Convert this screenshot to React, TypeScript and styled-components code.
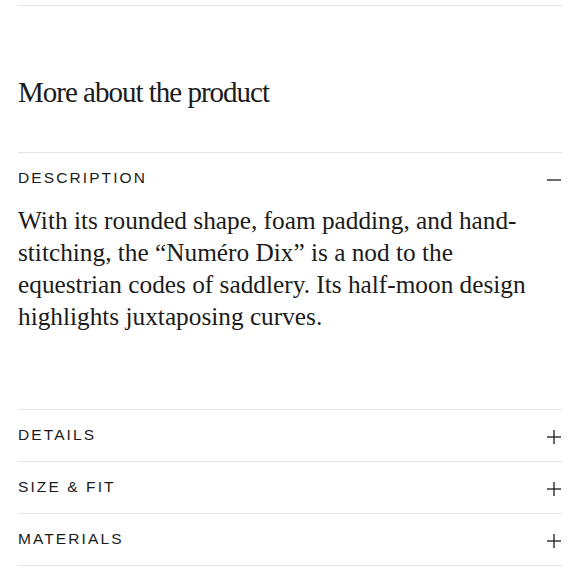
import React, { FC, useState } from 'react';
import styled, { createGlobalStyle } from 'styled-components';

const textColor = '#1b1b1b';
const ruleColor = '#e3e3e3';

const GlobalStyle = createGlobalStyle`
  html, body {
    margin: 0;
    padding: 0;
    background: #fff;
  }
`;

const Page = styled.div`
  padding: 5px 18px 0;
  color: ${textColor};
`;

const Rule = styled.hr`
  border: none;
  border-top: 1px solid ${ruleColor};
  margin: 0;
`;

const Heading = styled.h2`
  font-family: 'Liberation Serif', 'Times New Roman', serif;
  font-weight: 400;
  font-size: 29px;
  letter-spacing: -1px;
  line-height: 36px;
  margin: 68px 0 42px;
`;

const Section = styled.section`
  border-top: 1px solid ${ruleColor};
`;

const Header = styled.button`
  all: unset;
  box-sizing: border-box;
  width: 100%;
  height: 51px;
  padding-bottom: 2px;
  display: flex;
  align-items: center;
  justify-content: space-between;
  cursor: pointer;
`;

const Label = styled.span`
  font-family: 'Liberation Sans', Arial, sans-serif;
  font-size: 15.5px;
  letter-spacing: 2.1px;
  text-transform: uppercase;
`;

const Icon = styled.svg`
  width: 16px;
  height: 16px;
  margin-top: 4px;
  stroke: ${textColor};
  stroke-width: 1.3;
`;

const Body = styled.p`
  font-family: 'Liberation Serif', 'Times New Roman', serif;
  font-size: 25.3px;
  line-height: 32px;
  max-width: 532px;
  margin: 0 0 77px;
`;

type Item = { title: string; body?: string };

const items: Item[] = [
  {
    title: 'Description',
    body: 'With its rounded shape, foam padding, and hand-stitching, the \u201cNum\u00e9ro Dix\u201d is a nod to the equestrian codes of saddlery. Its half-moon design highlights juxtaposing curves.',
  },
  { title: 'Details' },
  { title: 'Size & Fit' },
  { title: 'Materials' },
];

const Toggle: FC<{ open: boolean }> = ({ open }) => (
  <Icon viewBox="0 0 16 16" fill="none">
    <line x1="1" y1="8" x2="15" y2="8" />
    {!open && <line x1="8" y1="1" x2="8" y2="15" />}
  </Icon>
);

const AccordionItem: FC<{ item: Item; open: boolean; onToggle: () => void }> = ({ item, open, onToggle }) => (
  <Section>
    <Header onClick={onToggle}>
      <Label>{item.title}</Label>
      <Toggle open={open} />
    </Header>
    {open && item.body && <Body>{item.body}</Body>}
  </Section>
);

const App: FC = () => {
  const [openIndex, setOpenIndex] = useState<number | null>(0);
  return (
    <Page>
      <GlobalStyle />
      <Rule />
      <Heading>More about the product</Heading>
      {items.map((item, i) => (
        <AccordionItem
          key={item.title}
          item={item}
          open={openIndex === i}
          onToggle={() => setOpenIndex(openIndex === i ? null : i)}
        />
      ))}
      <Rule />
    </Page>
  );
};

export default App;
